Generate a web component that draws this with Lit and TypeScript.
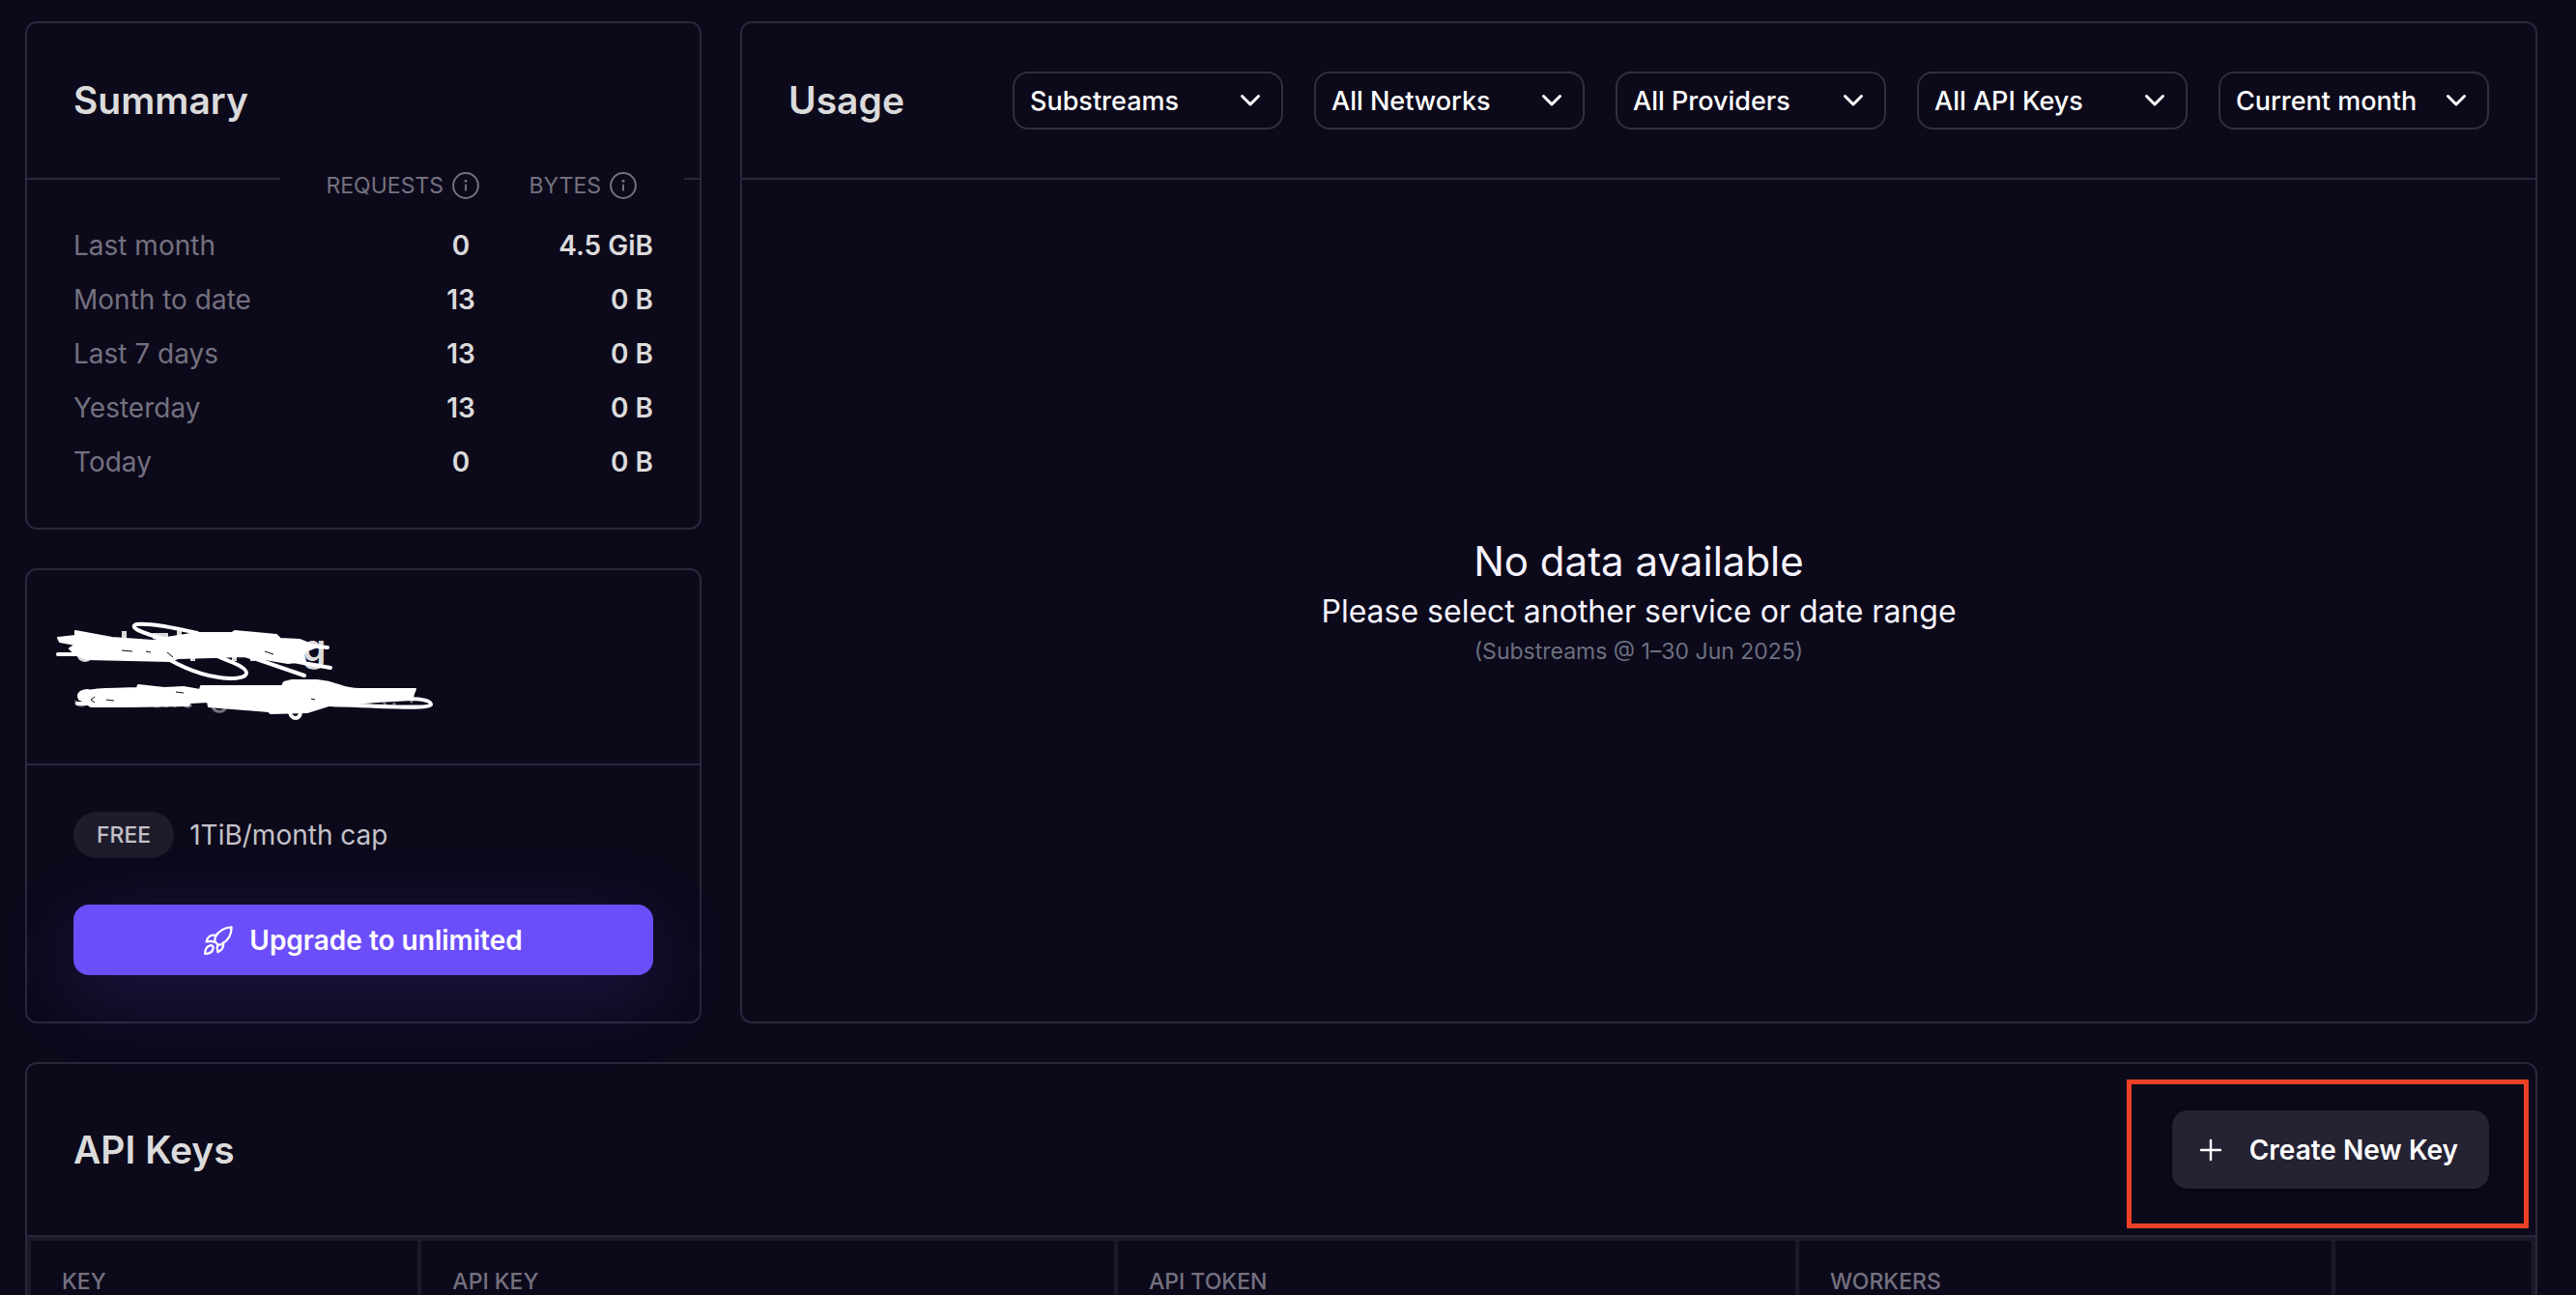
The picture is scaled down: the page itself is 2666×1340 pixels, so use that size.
import { LitElement, html, css, svg } from "lit";
import { customElement } from "lit/decorators.js";

interface SummaryRow {
  label: string;
  requests: string;
  bytes: string;
}

const SUMMARY: SummaryRow[] = [
  { label: "Last month", requests: "0", bytes: "4.5 GiB" },
  { label: "Month to date", requests: "13", bytes: "0 B" },
  { label: "Last 7 days", requests: "13", bytes: "0 B" },
  { label: "Yesterday", requests: "13", bytes: "0 B" },
  { label: "Today", requests: "0", bytes: "0 B" },
];

const FILTERS = [
  { name: "Service", value: "Substreams" },
  { name: "Network", value: "All Networks" },
  { name: "Provider", value: "All Providers" },
  { name: "API key", value: "All API Keys" },
  { name: "Period", value: "Current month" },
];

const infoIcon = html`<svg class="info" viewBox="0 0 28 28" aria-hidden="true">
  <circle cx="14" cy="14" r="12.9" />
  <path d="M14 13.400v5.400" />
  <circle class="dot" cx="14" cy="9.200" r="1.500" />
</svg>`;

const chevron = html`<svg class="chevron" viewBox="0 0 24 24" aria-hidden="true">
  <path d="M3.500 7.500 12 16l8.500-8.500" />
</svg>`;

const scribble = svg`
  <g fill="#dbdbdb">
    <path d="M86 23h5v9h-5zM118 25h16v6h-16zM143 23h5v8h-5zM157 46h5v8h-5zM200 46h5v8h-5zM219 46h5v8h-5z" />
    <circle cx="48" cy="46" r="9" />
  </g>
  <g fill="none" stroke="#74717f" stroke-width="3">
    <path d="M39 95c-2 5 8 7 10 2M118 98c2 4 7 4 9 0M132 96v6M141 96v6M150 99c3 3 6 3 8 0M180 101c2 7 12 7 14 0M282 96v6M292 96v6M305 100h10M330 99h14M358 97v5M368 97v5M385 88c3 3 3 6 0 9" />
  </g>
  <g fill="#fff" stroke="#fff" stroke-linejoin="round" stroke-linecap="round">
    <path stroke-width="2" d="M38 23 76 30 118 33 132 30 164 25 200 25 203 23 246 27 250 31 270 32 280 36 286 40 278 43 274 47 276 54 258 56 240 53 215 49 180 50 144 51 137 54 50 52 38 47 32 41 38 37 22 34 20 30 38 28Z" />
    <path fill="none" stroke-width="4" d="M20 47h45M164 25C134 18 110 15 101 16c-7 3 2 8 32 16M136 53c18 10 38 18 62 19 22 0 22-8 4-16-12-5-20-8-28-12M205 45l70 24M224 46l50 10 28 5M270 37l29 3" />
    <path stroke-width="2" d="M42 88C46 84 60 83 102 82L103 79 130 82 150 81 167 84 168 80 252 80 254 76 262 74 288 74C312 76 312 83 332 83L390 83 388 88 386 94 350 96 300 100 278 107 240 108 238 106 176 101 175 96 157 97 155 100 92 101 54 101 42 93Z" />
    <path fill="none" stroke-width="4" d="M40 98h110M300 99c60 2 104 5 106 0 0-5-14-6-24-6M264 100c-7 3-4 13 2 13s6-10 4-14M43 93c-3-5 2-8 8-8" />
  </g>
  <g stroke="#0c091b" stroke-width="1" fill="none">
    <path d="M86 43l11 1M111 44l5 1M133 45l6 5M234 44l9 3M142 86l8 1M70 94l8 1M58 91l-4 3 4 3M282 93l4 1" />
  </g>`;

@customElement("app-root")
export class AppRoot extends LitElement {
  static styles = css`
    :host {
      display: block;
      box-sizing: border-box;
      min-height: 100vh;
      background: #0c091b;
      color: #dbdbdb;
      font-family: Inter, "Liberation Sans", sans-serif;
      --line: #2a273a;
      --soft: #1b182a;
      --muted: #74717f;
    }
    *, *::before, *::after { box-sizing: border-box; }
    h2, p { margin: 0; }
    button, select { font: inherit; }
    .page {
      display: grid;
      grid-template-columns: 700px minmax(0, 1fr);
      gap: 40px;
      padding: 22px 40px 0 26px;
      height: 100vh;
      overflow: hidden;
      grid-template-rows: auto auto;
      align-content: start;
    }
    .side { display: flex; flex-direction: column; gap: 40px; }
    .card { border: 2px solid var(--line); border-radius: 12px; }
    .head {
      display: flex;
      align-items: center;
      height: 162px;
      padding: 0 48px;
      border-bottom: 2px solid var(--line);
    }
    .title { font-size: 39px; line-height: 48px; font-weight: 600; color: #dbdbdb; }
    .summary { height: 526px; }
    .stats { width: 100%; border-collapse: collapse; margin-top: -14px; }
    .stats th, .stats td { padding: 0; }
    .stats tbody td { height: 56px; font-size: 28px; text-align: right; font-weight: 600; }
    .stats tbody th { height: 56px; padding-left: 48px; font-size: 28px; font-weight: 400; text-align: left; color: var(--muted); }
    .stats thead th { height: 54px; padding-bottom: 14px; background: #0c091b; font-size: 23px; font-weight: 400; color: var(--muted); }
    .stats thead .blank { width: 262px; }
    .stats thead .edge { width: 16px; }
    .stats thead .requests { width: 250px; padding-right: 44px; }
    .stats tbody .requests { text-align: center; padding: 0 0 0 124px; }
    .stats tbody .bytes { padding-right: 32px; }
    .stats thead .bytes { padding-right: 49px; }
    .hd { display: flex; align-items: center; justify-content: flex-end; gap: 9px; line-height: 28px; }
    .info { width: 28px; height: 28px; fill: none; stroke: currentColor; stroke-width: 2; stroke-linecap: round; }
    .info .dot { fill: currentColor; stroke: none; }
    .plan { height: 471px; }
    .owner { height: 202px; border-bottom: 2px solid var(--line); padding: 40px 12px; }
    .scribble { display: block; width: 430px; height: 130px; overflow: visible; }
    .letter { fill: #dbdbdb; font-size: 39px; font-weight: 600; }
    .offer { display: flex; flex-direction: column; gap: 48px; padding: 48px; }
    .cap { display: flex; align-items: center; gap: 16px; font-size: 28px; line-height: 48px; color: #c3c2c8; }
    .pill { padding: 0 24px; border-radius: 24px; background: #1e1b2c; font-size: 23px; font-weight: 500; }
    .upgrade {
      display: flex;
      align-items: center;
      justify-content: center;
      gap: 17px;
      height: 73px;
      border: 0;
      border-radius: 16px;
      background: #6b4ef9;
      color: #fff;
      font-size: 28px;
      font-weight: 600;
      box-shadow: 0 20px 80px rgba(107, 78, 249, 0.2);
    }
    .rocket { width: 30px; height: 30px; fill: none; stroke: #fff; stroke-width: 2.400; stroke-linejoin: round; stroke-linecap: round; }
    .usage { display: flex; flex-direction: column; }
    .usage .head { justify-content: space-between; }
    .filters { display: flex; gap: 32px; }
    .filter { display: grid; align-items: center; width: 280px; }
    .filter select {
      grid-area: 1 / 1;
      height: 60px;
      width: 100%;
      padding: 0 48px 0 16px;
      appearance: none;
      border: 2px solid #312e40;
      border-radius: 16px;
      background: transparent;
      color: #fff;
      font-size: 27px;
      font-weight: 500;
    }
    .chevron {
      grid-area: 1 / 1;
      justify-self: end;
      width: 24px;
      height: 24px;
      margin-right: 22px;
      pointer-events: none;
      fill: none;
      stroke: #fff;
      stroke-width: 3;
      stroke-linecap: round;
      stroke-linejoin: round;
    }
    .empty {
      flex: 1;
      display: flex;
      flex-direction: column;
      align-items: center;
      justify-content: center;
      color: #f7f4ff;
    }
    .none { font-size: 42px; line-height: 56px; }
    .hint { font-size: 32px; line-height: 48px; }
    .range { font-size: 23px; line-height: 34px; color: #6b7080; }
    .keys { grid-column: 1 / -1; }
    .keys .head { height: 179px; justify-content: space-between; }
    .spot { position: relative; }
    .spot::after {
      content: "";
      position: absolute;
      inset: -32px -41px -41px -47px;
      border: 5px solid #ec4125;
      pointer-events: none;
    }
    .create {
      display: flex;
      align-items: center;
      gap: 28px;
      height: 81px;
      padding: 0 32px 0 28px;
      border: 0;
      border-radius: 16px;
      background: #252234;
      color: #fff;
      font-size: 28px;
      font-weight: 600;
      box-shadow: 0 2px 6px rgba(0, 0, 0, 0.4);
    }
    .plus { width: 24px; height: 24px; fill: none; stroke: #fff; stroke-width: 2.400; stroke-linecap: round; }
    .table { width: 100%; table-layout: fixed; border-collapse: collapse; border: 4px solid var(--soft); }
    .table th {
      height: 88px;
      padding: 0 32px;
      border: 4px solid var(--soft);
      text-align: left;
      font-size: 23px;
      line-height: 24px;
      font-weight: 500;
      color: var(--muted);
    }
    .c1 { width: 15.6%; }
    .c2 { width: 27.8%; }
    .c3 { width: 27.2%; }
    .c4 { width: 21.4%; }
  `;

  private renderSummary() {
    return html`<section class="card summary">
      <header class="head"><h2 class="title">Summary</h2></header>
      <table class="stats">
        <thead>
          <tr>
            <td class="blank"></td>
            <th class="requests" scope="col"><div class="hd">REQUESTS ${infoIcon}</div></th>
            <th class="bytes" scope="col"><div class="hd">BYTES ${infoIcon}</div></th>
            <td class="edge"></td>
          </tr>
        </thead>
        <tbody>
          ${SUMMARY.map(
            (row) => html`<tr>
              <th scope="row">${row.label}</th>
              <td class="requests">${row.requests}</td>
              <td class="bytes">${row.bytes}</td>
              <td></td>
            </tr>`,
          )}
        </tbody>
      </table>
    </section>`;
  }

  private renderPlan() {
    return html`<section class="card plan">
      <div class="owner">
        <svg class="scribble" viewBox="0 0 430 130" aria-hidden="true">
          <text class="letter" x="273" y="54">g</text>
          ${scribble}
        </svg>
      </div>
      <div class="offer">
        <div class="cap"><span class="pill">FREE</span><span>1TiB/month cap</span></div>
        <button class="upgrade" type="button">
          <svg class="rocket" viewBox="0 0 32 32" aria-hidden="true">
            <path d="M30.500 1.500C22 2 16 6 12.500 12.500L12 17l4 4.500 4-1.500C27 16 30.500 10 30.500 1.500Z" />
            <path d="M13.500 10.500C8 9.500 4 12 2.800 17.500L8 17l4.500 1M21.500 18.500c.5 5-1.500 8.500-6 10.500l-1-5 1-3.500" />
            <path d="M8 21.500C3.500 22 1.300 25 1.300 31c5.500 0 8.500-2.500 9-6.500C10.300 22.500 9.500 21.700 8 21.500Z" />
          </svg>
          Upgrade to unlimited
        </button>
      </div>
    </section>`;
  }

  private renderUsage() {
    return html`<section class="card usage">
      <header class="head">
        <h2 class="title">Usage</h2>
        <div class="filters">
          ${FILTERS.map(
            (f) => html`<label class="filter">
              <select aria-label=${f.name}><option>${f.value}</option></select>
              ${chevron}
            </label>`,
          )}
        </div>
      </header>
      <div class="empty">
        <p class="none">No data available</p>
        <p class="hint">Please select another service or date range</p>
        <p class="range">(Substreams @ 1–30 Jun 2025)</p>
      </div>
    </section>`;
  }

  render() {
    return html`<main class="page">
      <div class="side">${this.renderSummary()}${this.renderPlan()}</div>
      ${this.renderUsage()}
      <section class="card keys">
        <header class="head">
          <h2 class="title">API Keys</h2>
          <div class="spot">
            <button class="create" type="button">
              <svg class="plus" viewBox="0 0 24 24" aria-hidden="true"><path d="M12 2v20M2 12h20" /></svg>
              Create New Key
            </button>
          </div>
        </header>
        <table class="table">
          <thead>
            <tr>
              <th class="c1" scope="col">KEY</th>
              <th class="c2" scope="col">API KEY</th>
              <th class="c3" scope="col">API TOKEN</th>
              <th class="c4" scope="col">WORKERS</th>
              <th scope="col" aria-label="Actions"></th>
            </tr>
          </thead>
        </table>
      </section>
    </main>`;
  }
}
